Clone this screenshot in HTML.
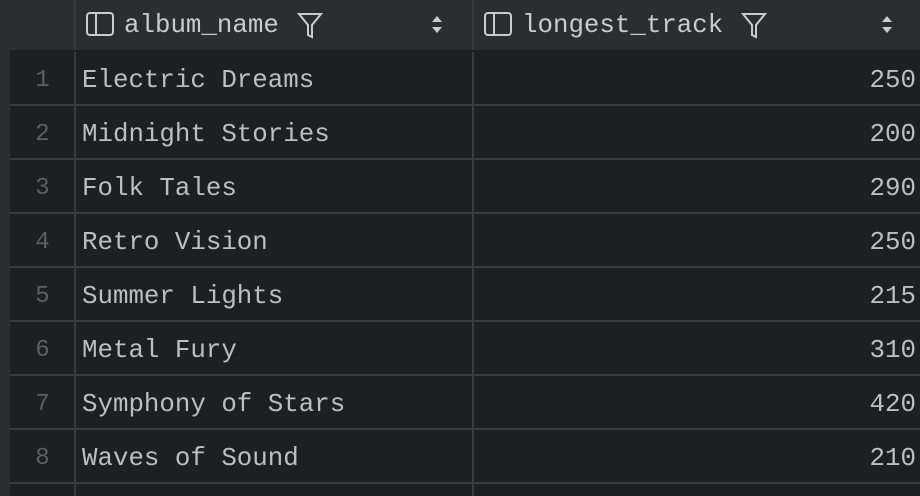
<!DOCTYPE html>
<html><head><style>
body{margin:0;width:920px;height:496px;background:#1e1f22;overflow:hidden;position:relative;font-family:"Liberation Mono",monospace;}
.g{position:absolute;left:0;top:0;width:10px;height:496px;background:#2b2d30;}
.h{position:absolute;left:10px;top:0;width:910px;height:50px;background:#2b2d30;}
.vl{position:absolute;top:0;width:2px;height:496px;background:#393b40;}
.hl{position:absolute;left:10px;width:910px;height:2px;background:#393b40;}
.t{position:absolute;font-size:25.8px;color:#bcbec4;line-height:30px;white-space:pre;}
.n{position:absolute;font-size:24px;color:#5c5f66;width:65px;left:10px;text-align:center;line-height:30px;}
.r{position:absolute;right:4px;font-size:25.8px;color:#bcbec4;line-height:30px;}
.ht{position:absolute;top:11px;font-size:25.8px;color:#c9cbd0;line-height:30px;}
</style></head><body>
<div class="g"></div><div class="h"></div>
<div class="vl" style="left:74px"></div><div class="vl" style="left:472px"></div>
<div class="hl" style="top:50px;background:#1e1f22"></div>
<div class="hl" style="top:104px"></div><div class="hl" style="top:158px"></div><div class="hl" style="top:212px"></div><div class="hl" style="top:266px"></div><div class="hl" style="top:320px"></div><div class="hl" style="top:374px"></div><div class="hl" style="top:428px"></div><div class="hl" style="top:482px"></div>
<svg style="position:absolute;left:0;top:0" width="920" height="50" fill="none" stroke="#c9cbd0" stroke-width="2">
<rect x="87" y="13" width="26" height="22" rx="3"/><line x1="96" y1="13" x2="96" y2="35"/>
<path d="M299 14h22l-9 11v12l-4-2v-10z"/>
<rect x="485" y="13" width="26" height="22" rx="3"/><line x1="494" y1="13" x2="494" y2="35"/>
<path d="M743 14h22l-9 11v12l-4-2v-10z"/>
<path d="M432 22l5-6 5 6zM432 27l5 6 5-6z M882 22l5-6 5 6zM882 27l5 6 5-6z" fill="#c9cbd0" stroke="none"/>
</svg>
<div class="ht" style="left:124px">album_name</div>
<div class="ht" style="left:522px">longest_track</div>
<div class="n" style="top:66px">1</div><div class="t" style="left:82px;top:66px">Electric Dreams</div><div class="r" style="top:66px">250</div>
<div class="n" style="top:120px">2</div><div class="t" style="left:82px;top:120px">Midnight Stories</div><div class="r" style="top:120px">200</div>
<div class="n" style="top:174px">3</div><div class="t" style="left:82px;top:174px">Folk Tales</div><div class="r" style="top:174px">290</div>
<div class="n" style="top:228px">4</div><div class="t" style="left:82px;top:228px">Retro Vision</div><div class="r" style="top:228px">250</div>
<div class="n" style="top:282px">5</div><div class="t" style="left:82px;top:282px">Summer Lights</div><div class="r" style="top:282px">215</div>
<div class="n" style="top:336px">6</div><div class="t" style="left:82px;top:336px">Metal Fury</div><div class="r" style="top:336px">310</div>
<div class="n" style="top:390px">7</div><div class="t" style="left:82px;top:390px">Symphony of Stars</div><div class="r" style="top:390px">420</div>
<div class="n" style="top:444px">8</div><div class="t" style="left:82px;top:444px">Waves of Sound</div><div class="r" style="top:444px">210</div>
</body></html>
